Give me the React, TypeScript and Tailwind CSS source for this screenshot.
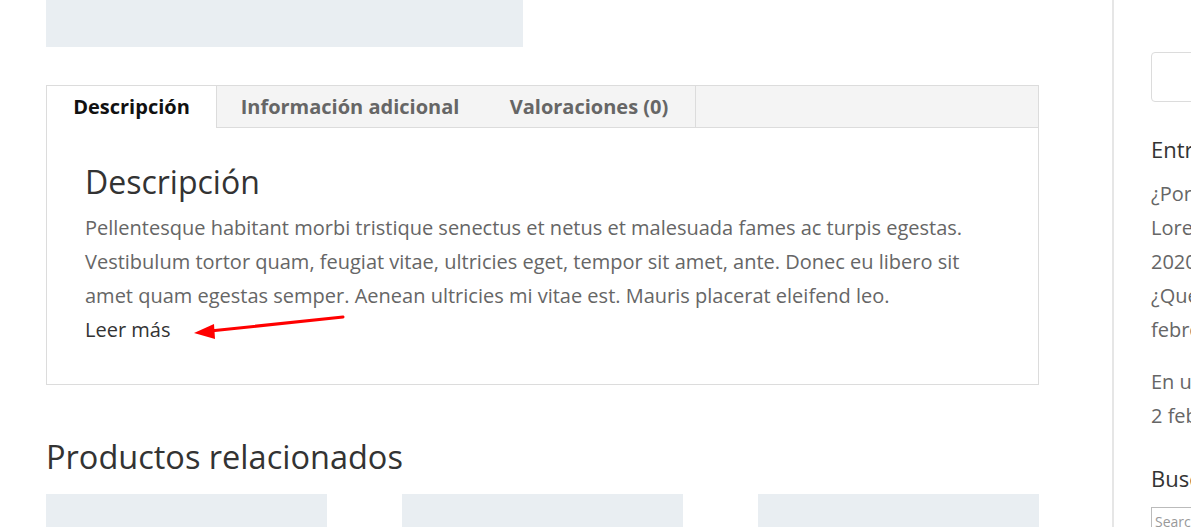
import React from "react";

export default function App() {
  const font = { fontFamily: '"Open Sans", "Noto Sans", sans-serif' };
  return (
    <div className="w-[1191px] h-[527px] overflow-hidden bg-white flex" style={font}>
      {/* main column */}
      <div className="w-[1112px] shrink-0 pl-[46px]">
        <div className="w-[477px] h-[47px] bg-[#e9eef2]" />
        <div className="w-[993px] mt-[38px] border border-[#dcdcdc]">
          <div className="flex h-[42px] bg-[#f4f4f4] border-b border-[#dcdcdc]">
            <div className="w-[170px] h-[42px] bg-white border-r border-[#dcdcdc] flex items-center justify-center text-[20px] font-bold text-[#111]">
              Descripción
            </div>
            <div className="w-[266px] flex items-center justify-center text-[20px] font-bold text-[#666]">
              Información adicional
            </div>
            <div className="w-[213px] border-r border-[#dcdcdc] flex items-center justify-center text-[20px] font-bold text-[#666]">
              Valoraciones (0)
            </div>
          </div>
          <div className="relative pl-[38px] pr-[40px] pt-[34px] pb-[37px]">
            <h2 className="text-[32px] leading-[40px] text-[#333] mb-[9px]">Descripción</h2>
            <p className="text-[20px] leading-[34px] text-[#666]">
              Pellentesque habitant morbi tristique senectus et netus et malesuada fames ac turpis egestas.
              Vestibulum tortor quam, feugiat vitae, ultricies eget, tempor sit amet, ante. Donec eu libero sit
              amet quam egestas semper. Aenean ultricies mi vitae est. Mauris placerat eleifend leo.
            </p>
            <p className="text-[20px] leading-[34px] text-[#333]">Leer más</p>
            <svg
              className="absolute left-[141px] top-[184px]"
              width="165"
              height="30"
              viewBox="0 0 165 30"
            >
              <line x1="155" y1="5" x2="22" y2="19" stroke="#ff0000" strokeWidth="3" strokeLinecap="round" />
              <polygon points="6,21 26,12 27,27" fill="#ff0000" />
            </svg>
          </div>
        </div>
        <h2 className="mt-[50px] text-[32.5px] leading-[44px] text-[#333]">Productos relacionados</h2>
        <div className="mt-[15px] flex gap-[75px]">
          <div className="w-[281px] h-[60px] bg-[#e9eef2]" />
          <div className="w-[281px] h-[60px] bg-[#e9eef2]" />
          <div className="w-[281px] h-[60px] bg-[#e9eef2]" />
        </div>
      </div>
      {/* sidebar */}
      <div className="flex-1 min-w-0 border-l-2 border-[#e6e6e6] pl-[37px] pt-[52px] overflow-hidden whitespace-nowrap">
        <div className="w-[200px] h-[50px] border border-[#dcdcdc] rounded-[4px]" />
        <h4 className="mt-[32px] text-[22px] leading-[30px] text-[#333]">Entradas recientes</h4>
        <div className="mt-[13px] text-[20px] leading-[34px] text-[#666]">
          <div>¿Por qué elegirnos?</div>
          <div>Lorem ipsum dolor sit amet</div>
          <div>2020</div>
          <div>¿Qué hacemos?</div>
          <div>febrero 2020</div>
          <div className="mt-[18px]">En una galaxia muy lejana</div>
          <div>2 febrero 2020</div>
        </div>
        <h4 className="mt-[30px] text-[22px] leading-[30px] text-[#333]">Buscar</h4>
        <div className="mt-[14px] w-[200px] h-[30px] border border-[#bbb] text-[14px] leading-[28px] text-[#999] pl-[3px]">
          Search
        </div>
      </div>
    </div>
  );
}
